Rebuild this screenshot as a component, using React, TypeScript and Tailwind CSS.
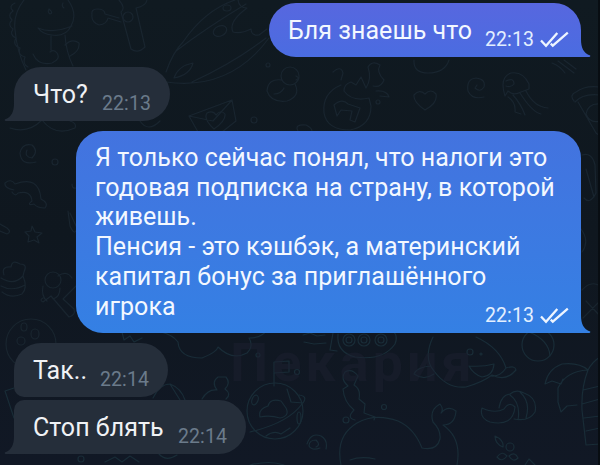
import React from "react"

const messages = [
  { lines: ["Бля знаешь что"], time: "22:13", mine: true, tail: true, box: "mt-[3px] w-[312px] h-[54px] pt-[13px] rounded-[27px] rounded-br-none bg-linear-to-b from-[#5767df] to-[#4a6ce1]", tailColor: "#4a6ce1" },
  { lines: ["Что?"], time: "22:13", tail: true, box: "mt-[10px] w-[156px] h-[54px] pt-[13px] rounded-[27px] rounded-bl-none bg-[#252e3a]", tailColor: "#252e3a" },
  {
    lines: [
      "Я только сейчас понял, что налоги это",
      "годовая подписка на страну, в которой",
      "живешь.",
      "Пенсия - это кэшбэк, а материнский",
      "капитал бонус за приглашённого",
      "игрока",
    ],
    time: "22:13",
    mine: true,
    tail: true,
    box: "mt-[10px] w-[505px] h-[202px] pt-[12px] rounded-[27px] rounded-br-none bg-linear-to-b from-[#4373df] to-[#3480e4]",
    tailColor: "#3480e4",
  },
  { lines: ["Так.."], time: "22:14", box: "mt-[10px] w-[154px] h-[54px] pt-[13px] rounded-[27px] rounded-bl-[10px] bg-[#252e3a]" },
  { lines: ["Стоп блять"], time: "22:14", tail: true, box: "mt-[3px] w-[232px] h-[54px] pt-[13px] rounded-[27px] rounded-tl-[10px] rounded-bl-none bg-[#252e3a]", tailColor: "#252e3a" },
]

const Ticks = () => (
  <svg className="ml-[6px] mb-[2px]" width="29" height="17" viewBox="0 0 29 17" fill="none" stroke="#eef5ff" strokeWidth="2.3">
    <path d="M1 9.5 L6 14.7 L17.3 2" />
    <path d="M10.8 12.6 L12.8 14.7 L27.8 1.6" />
  </svg>
)

const Tail = ({ mine, color }) => (
  <svg
    className={mine ? "absolute bottom-0 -right-[10px]" : "absolute bottom-0 -left-[10px] -scale-x-100"}
    width="11"
    height="18"
    viewBox="0 0 11 18"
  >
    <path d="M0 0 L1 0 C1 9 3.5 14 10.2 16.6 Q10.8 17.5 9.5 18 L0 18 Z" fill={color} />
  </svg>
)

const Message = ({ lines, time, mine, tail, box, tailColor }) => (
  <div className={`relative flex flex-col pl-[19px] text-[25px] leading-[29.7px] tracking-[0.04px] whitespace-nowrap ${mine ? "self-end pr-[12px] text-[#f3f8ff]" : "self-start pr-[19px] text-[#f0f2f5]"} ${box}`}>
    {lines.slice(0, -1).map(line => (
      <p key={line}>{line}</p>
    ))}
    <div className="flex-1 flex justify-between">
      <p>{lines[lines.length - 1]}</p>
      <div className="flex items-end self-end mb-[7px]">
        <span className={`text-[19.5px] leading-5 tracking-[0.1px] ${mine ? "text-[#e3efff]" : "text-[#6b7b8b]"}`}>{time}</span>
        {mine && <Ticks />}
      </div>
    </div>
    {tail && <Tail mine={mine} color={tailColor} />}
  </div>
)

// faint doodles of the chat wallpaper
const Wallpaper = () => (
  <svg className="absolute inset-0" width="600" height="465" viewBox="0 0 600 465" fill="none" stroke="#19252f" strokeWidth="1.2" strokeLinecap="round" strokeLinejoin="round">
    {/* dinosaur */}
    <path d="M24 0 Q13 14 15 30 Q17 52 26 70 M68 0 Q78 14 71 26 Q66 37 52 35 Q42 34 38 28 Q52 34 72 26 M51 36 V50 M33 54 Q38 66 52 63 Q61 59 57 53 Q54 49 50 52 M65 35 Q66 52 73 66 M65 45 Q72 38 79 43 Q80 51 70 56" />
    <path d="M15 3 q-7 3 -2 8 q-6 4 -1 9 q-5 5 1 9 q-4 6 3 9 q-4 7 4 10 q-3 7 5 9 q-3 7 3 10 M49 9 q-2 3 1 5 q4 -1 -1 -5 M63 3 q-2 3 1 5" />
    {/* bone and stick */}
    <path d="M92 15 Q91 9 97 9 Q105 9 105 14 L119 18 M92 15 Q91 22 99 25 Q107 24 108 18 L121 22 M119 0 Q126 8 121 12 L131 49 Q138 54 145 47 L136 8 Q146 6 147 0" />
    <circle cx="128" cy="17" r="5" />
    {/* surfboard */}
    <path d="M166 72 Q173 52 183 42 Q205 10 235 0 M176 51 Q206 28 246 4 M166 82 Q230 91 269 38 M192 82 Q235 62 266 38 M174 78 Q178 66 193 63 Q190 75 174 78 M238 0 Q239 8 247 8 Q228 22 233 32 Q241 34 251 29 Q251 36 259 35 L267 29" />
    <ellipse cx="220" cy="31" rx="7" ry="5" transform="rotate(-25 220 31)" />
    <ellipse cx="227" cy="8" rx="4" ry="3" />
    {/* duck, letter */}
    <circle cx="290" cy="76" r="9" />
    <path d="M282 80 Q268 78 267 91 Q271 103 287 101 Q301 96 295 84 M274 94 Q281 94 284 88 M296 76 l3 2 l-3 2 M189 116 L232 100 L236 121 L222 132 M189 116 L198 132 M189 116 L213 121 L232 100 M214 129 Q203 119 207 113 Q213 110 216 115 Q221 109 225 114 Q226 121 214 129" />
    <circle cx="254" cy="120" r="3" />
    <circle cx="268" cy="65" r="2" />
    <path d="M298 131 Q294 124 306 125 Q312 128 312 131 M140 121 Q148 133 160 121 M10 128 Q28 134 42 120 Q55 137 75 128 Q77 123 70 121" />
    {/* fish bowl */}
    <path d="M341 85 Q322 93 324 113 Q327 130 350 130 Q371 126 371 106 L369 98 Q352 102 344 91 Q344 84 351 82 L356 85 L361 77 L366 88 M366 88 Q372 79 368 67 Q372 60 380 65 Q376 72 384 80 Q381 88 373 86 M334 105 Q342 98 348 104 L360 108 L355 122 L350 120 L352 111 L341 110 L337 116 Z M333 72 Q341 65 343 73 L341 80 M376 91 Q387 90 389 97 L380 96" />
    <circle cx="378" cy="102" r="2" />
    {/* heart, swirl, jellyfish */}
    <path d="M425 110 Q413 102 414 95 Q419 89 425 94 Q431 88 436 94 Q438 103 425 110 M484 97 Q472 100 468 91 Q466 79 476 78 Q486 79 484 87 Q480 93 475 88 L477 85 M414 60 Q413 73 428 73 Q445 73 449 60 M505 96 Q499 77 511 73 Q523 71 529 84 L529 89 L521 92 Q513 96 508 91 Z M506 81 q8 -4 8 3 q-3 4 -8 2 M508 97 q8 5 7 15 l6 2 M513 95 q8 9 12 20 M520 93 Q532 112 541 114 M526 91 Q534 107 548 108 M552 63 Q560 66 565 73 M558 61 L574 73 M564 60 L576 69" />
    {/* pizza and right edge */}
    <path d="M574 101 Q569 95 576 92 Q585 85 600 87 M575 102 Q583 93 600 95 M578 102 L596 133 L600 136 M600 104 Q588 103 586 114 Q590 124 600 121 M582 155 Q592 152 595 165 L596 193 Q590 205 584 198 M586 169 L594 197 M581 229 Q590 241 582 252 M582 290 Q591 280 600 286 M586 301 L600 316 M583 318 L600 301" />
    {/* left column */}
    <path d="M36 162 Q21 166 20 153 Q22 143 32 145 Q39 151 32 158 Q24 157 27 150 M14 190 Q4 188 5 183 Q11 178 15 184 Q39 175 41 199 Q49 203 45 208 Q37 208 34 204 Q26 206 32 201 Q31 190 18 193 Q15 197 12 192 M0 224 L7 228 Q12 232 7 234 L0 231 M32 226 L35 232 L42 233 L37 237 L39 243 L34 240 L28 242 L29 236 L25 232 L31 231 Z M68 211 L70 226 Q75 237 77 228 L70 213 M72 184 q0 5 4 4" />
    <circle cx="55" cy="162" r="3" />
    <path d="M4 275 Q1 266 11 267 Q12 259 20 264 Q28 264 24 272 L23 276 M1 278 Q14 286 23 276 Q28 288 22 294 Q11 299 2 292 M1 286 Q12 292 25 285 M43 286 Q41 296 47 301 M60 288 Q60 297 53 299 M43 298 Q39 300 43 302 L51 296 L57 303 L69 317 Q76 315 74 309 L63 299 L76 286 M58 276 Q67 270 72 278" />
    <circle cx="53" cy="280" r="8" />
    <circle cx="31" cy="344" r="25" />
    <ellipse cx="24" cy="327" rx="3" ry="4" />
    <ellipse cx="35" cy="334" rx="4" ry="5" />
    <circle cx="21" cy="341" r="4" />
    <g stroke="#192c37">
      {/* cloud and envelope */}
      <path d="M161 332 Q173 335 178 342 Q179 358 202 358 Q217 352 218 347 Q232 361 247 353 Q254 346 249 338 Q263 338 267 329 M122 332 l2 8 l6 -4 l4 6 l8 -4 M5 391 L14 388 M5 391 L14 418 M153 398 Q160 384 170 384 Q181 388 185 400 M170 384 L180 400" />
      <path d="M202 399 Q208 389 217 390 Q211 382 218 377 L226 377 Q231 383 225 389 Q232 394 226 399 M159 454 Q166 462 177 455 M105 462 l10 -5 l7 5 l8 -6 l9 6" />
      {/* planet with flag */}
      <circle cx="275" cy="411" r="28" />
      <path d="M274 386 V362 L289 361 L289 372 L274 373 M260 417 Q258 409 268 406 Q270 398 281 401 L286 408 Q290 416 280 418 Q270 415 260 417 M287 389 L291 402 L303 403 Q308 396 299 395 M250 432 Q288 423 302 404 M266 436 Q274 430 281 434 L290 428" />
      <ellipse cx="255" cy="400" rx="3" ry="5" transform="rotate(20 255 400)" />
      <ellipse cx="299" cy="418" rx="2" ry="6" />
      <circle cx="297" cy="372" r="2.5" />
      <circle cx="258" cy="355" r="2" />
      <circle cx="81" cy="459" r="3" />
      {/* robot */}
      <path d="M303 335 L310 333 L317 336 L325 335 M304 342 L314 344 L326 343 M333 333 L330 350 L337 351 M338 334 Q336 352 355 357 Q383 361 395 344 Q398 337 394 332" />
      <circle cx="349" cy="340" r="6" />
      <circle cx="349" cy="340" r="3" />
      <circle cx="364" cy="340" r="6" />
      <circle cx="364" cy="340" r="3" />
      <circle cx="381" cy="340" r="6" />
      <circle cx="381" cy="340" r="3" />
      {/* whale */}
      <path d="M341 465 Q335 436 357 423 Q375 413 398 421 Q414 428 422 448 Q437 451 440 439 Q441 430 433 422 Q429 410 440 404 Q444 409 441 413 Q448 405 456 411 Q455 425 443 425 Q462 438 457 465 M350 460 Q361 456 375 459 M355 420 Q346 418 354 410 Q344 402 343 389 L348 386 Q340 379 345 372 Q352 368 358 376 L354 385 Q361 389 359 399 L365 404 L364 413 L375 417 L374 420 M320 448 Q312 451 309 446 Q309 440 316 440 Q321 445 316 447 M307 444 Q311 432 321 436 Q328 440 326 449 M250 465 Q270 460 284 465" />
      <circle cx="346" cy="420" r="3" />
      <circle cx="384" cy="407" r="2.5" />
      {/* narwhal */}
      <path d="M433 337 Q423 358 434 371 Q447 389 466 387 Q483 382 492 375 Q506 382 516 370 Q515 365 506 368 Q500 348 476 337 M431 366 Q417 367 414 374 Q424 381 434 374 M469 366 Q483 367 494 364 Q493 376 482 377 Q473 374 469 366 M506 368 Q500 377 491 376" />
      <circle cx="470" cy="352" r="3" />
      <circle cx="481" cy="354" r="1" />
      {/* ball, croissant, palm */}
      <circle cx="538" cy="345" r="16" />
      <path d="M529 332 Q549 340 550 356 M482 408 Q479 418 490 422 Q513 427 515 407 Q509 401 504 409 Q495 414 482 408 M499 408 Q501 395 510 394 Q516 389 524 393 Q538 398 535 412 Q529 422 514 419 M510 395 Q521 403 518 420 M520 392 Q531 402 526 418 M545 384 Q548 369 562 364 Q579 362 588 370 Q592 362 600 357 M545 384 L552 381 L561 384 L563 379 M588 370 Q566 371 558 388 L558 402 L561 412 L567 406 L577 405 M588 370 Q581 388 582 410 L586 445 L600 444 M583 390 L600 386 M582 404 L600 399 M584 418 L600 416 M586 431 L600 428 M495 436 Q504 440 503 447 Q495 444 495 436 M497 457 Q502 450 507 456 Q502 463 497 457 M509 456 q6 -5 9 2 q-5 5 -9 -2 M525 465 L529 459 L535 465" />
      <circle cx="510" cy="447" r="4" />
    </g>
  </svg>
)

const App = () => (
  <div className="relative w-[600px] h-[465px] overflow-hidden bg-linear-to-b from-[#101a21] via-[#0f171f] to-[#111825] font-['Roboto',sans-serif]">
    <Wallpaper />
    <span className="absolute left-[230px] top-[331px] text-[54px] leading-[64px] font-bold tracking-[4px] text-[#1b2030]/50">Пекария</span>
    <div className="relative flex flex-col pl-[14px] pr-[19px]">
      {messages.map((m, i) => (
        <Message key={i} {...m} />
      ))}
    </div>
    <div className="absolute right-0 top-0 w-[2px] h-[465px] bg-[#080d12]" />
  </div>
)

export default App
